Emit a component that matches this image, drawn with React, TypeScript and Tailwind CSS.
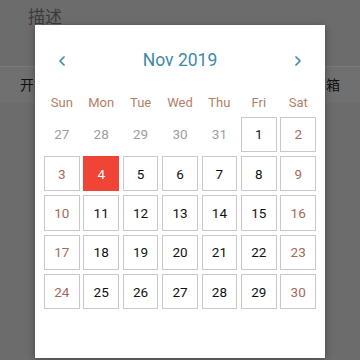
import { ChevronLeft, ChevronRight } from "lucide-react";

const weekdays = ["Sun", "Mon", "Tue", "Wed", "Thu", "Fri", "Sat"];

type Day = { n: number; muted?: boolean };

const days: Day[] = [
  { n: 27, muted: true },
  { n: 28, muted: true },
  { n: 29, muted: true },
  { n: 30, muted: true },
  { n: 31, muted: true },
  ...Array.from({ length: 30 }, (_, i) => ({ n: i + 1 })),
];

function DayCell({ day, index }: { day: Day; index: number }) {
  const col = index % 7;
  const weekend = col === 0 || col === 6;
  if (day.muted) {
    return <div className="flex h-[35.5px] items-center justify-center text-[13.5px] text-[#9e9e9e]">{day.n}</div>;
  }
  if (day.n === 4) {
    return <div className="flex h-[35.5px] items-center justify-center bg-[#f04437] text-[13.5px] text-white">{day.n}</div>;
  }
  return (
    <div
      className={`flex h-[35.5px] items-center justify-center border-[1.5px] border-[#c9c9c9] text-[13.5px] ${
        weekend ? "text-[#a46a5e]" : "text-[#111111]"
      }`}
    >
      {day.n}
    </div>
  );
}

export default function App() {
  return (
    <div className="relative h-[360px] w-[360px] overflow-hidden bg-[#6c6c6c] font-['Roboto','Noto_Sans_CJK_SC',sans-serif]">
      {/* page behind the dim layer */}
      <div className="h-[67px] border-b border-[#7a7a7a] px-[28px] pt-[5px] text-[17px] text-[#3c3c3c]">描述</div>
      <div className="flex h-[36px] items-center justify-between bg-[#707070] pl-[20px] pr-[20px] text-[14px] text-[#111111]">
        <span>开始时间</span>
        <span>邮箱</span>
      </div>

      <div className="absolute left-[35px] top-[25px] h-[333px] w-[290px] bg-white px-[9px] pt-[24px] shadow-[0_2px_8px_rgba(0,0,0,0.35)]">
        <div className="grid h-[24px] grid-cols-7 items-center gap-x-[3.8px] text-[#3f89a7]">
          <div className="flex justify-center">
            <ChevronLeft size={16} strokeWidth={2.6} />
          </div>
          <div className="col-span-5 text-center text-[17.5px] leading-none">Nov 2019</div>
          <div className="flex justify-center">
            <ChevronRight size={16} strokeWidth={2.6} />
          </div>
        </div>
        <div className="mt-[20px] grid h-[20px] grid-cols-7 items-center gap-x-[3.8px]">
          {weekdays.map((w) => (
            <div key={w} className="text-center text-[13px] text-[#b38066]">
              {w}
            </div>
          ))}
        </div>
        <div className="mt-[3.7px] grid grid-cols-7 gap-x-[3.8px] gap-y-[3.8px]">
          {days.map((d, i) => (
            <DayCell key={i} day={d} index={i} />
          ))}
        </div>
      </div>
    </div>
  );
}
